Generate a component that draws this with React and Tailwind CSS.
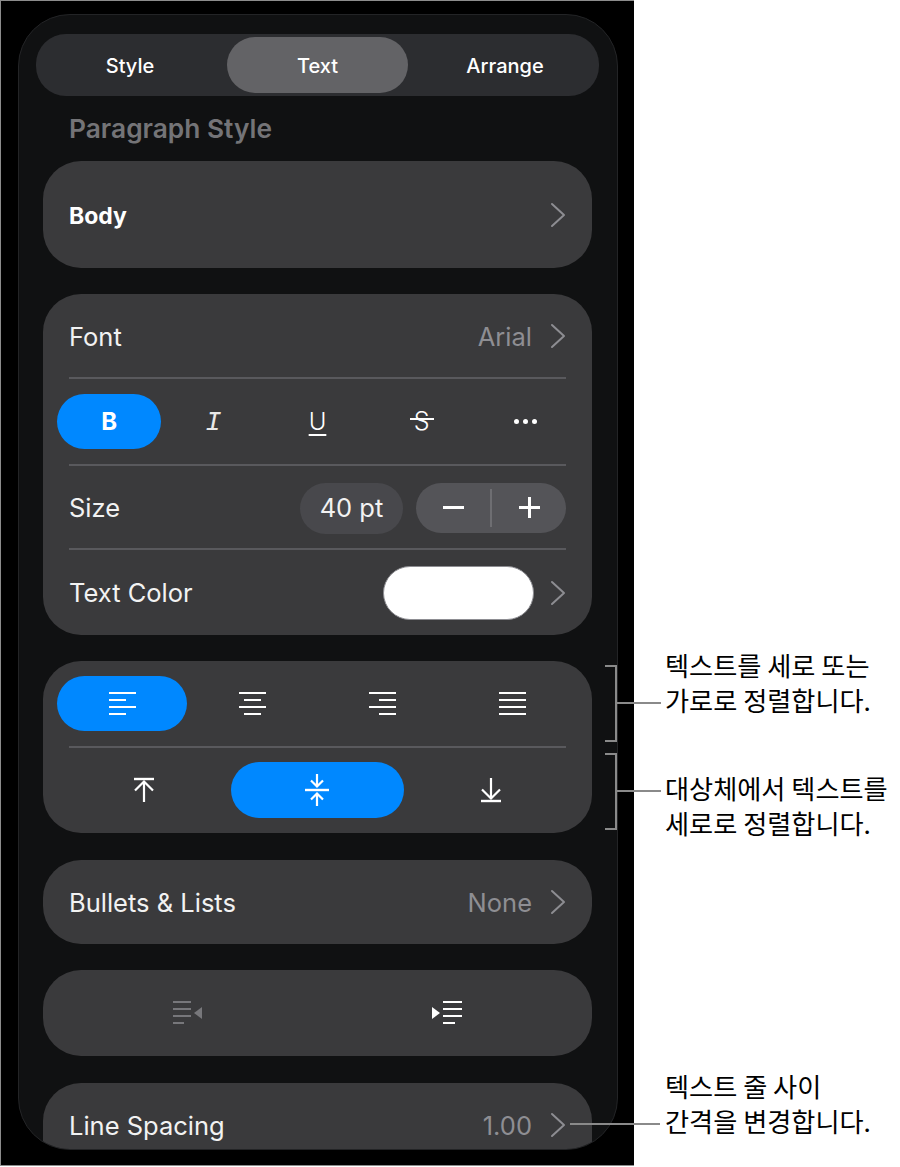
const ui = { fontFamily: 'Inter, "Noto Sans", sans-serif' };

const Chevron = ({ className = '' }) => (
  <svg width="16" height="26" viewBox="0 0 16 26" fill="none" className={className}>
    <path d="M2 2 L14 13 L2 24" stroke="#8d8d92" strokeWidth="2" strokeLinecap="round" strokeLinejoin="round" />
  </svg>
);

const Divider = () => <div className="mx-[26px] h-[2px] bg-[#59595d]" />;

// stacked text-alignment lines, each line is [x1, x2]
const LinesIcon = ({ lines, color = 'white', width = 27 }) => (
  <svg width={width} height="26" viewBox={`0 0 ${width} 26`} fill="none">
    {lines.map(([a, b], i) => (
      <path key={i} d={`M${a} ${2 + i * 7}H${b}`} stroke={color} strokeWidth="2" />
    ))}
  </svg>
);

const ArrowIcon = ({ kind }) => (
  <svg width="26" height="36" viewBox="0 0 26 36" fill="none" stroke="white" strokeWidth="2.2">
    {kind === 'top' && (
      <>
        <path d="M3 7H23" strokeWidth="2.4" />
        <path d="M13 9V30M4 18.5L13 9.5L22 18.5" />
      </>
    )}
    {kind === 'middle' && (
      <>
        <path d="M1 18H25" strokeWidth="2.4" />
        <path d="M13 2V14M7 8.5L13 14.5L19 8.5" />
        <path d="M13 34V22M7 27.5L13 21.5L19 27.5" />
      </>
    )}
    {kind === 'bottom' && (
      <>
        <path d="M3 29H23" strokeWidth="2.4" />
        <path d="M13 6V27M4 17.5L13 26.5L22 17.5" />
      </>
    )}
  </svg>
);

const Row = ({ label, value, bold, nudge = 'pt-[4px]' }) => (
  <div className="flex h-full items-center justify-between pl-[26px] pr-[26px]">
    <span className={bold ? `${nudge} text-[23px] font-bold text-white` : `${nudge} text-[25.5px] text-[#f2f2f2]`}>{label}</span>
    <div className="flex items-center gap-[18px]">
      {value && <span className={`${nudge} text-[25.5px] text-[#8e8e93]`}>{value}</span>}
      <Chevron />
    </div>
  </div>
);

const Card = ({ className = '', children }) => (
  <div className={`ml-[24px] mr-[25px] shrink-0 rounded-[38px] bg-[#3a3a3c] ${className}`}>{children}</div>
);

const styleTabs = [
  { label: 'Style', cls: 'w-[191px] pr-[3px]' },
  { label: 'Text', cls: 'w-[181px] rounded-[28px] bg-[#636366]' },
  { label: 'Arrange', cls: 'w-[190px] pl-[4px]' },
];

const alignIcons = [
  [[0, 27], [0, 17], [0, 27], [0, 17]],
  [[0, 27], [5, 22], [0, 27], [5, 22]],
  [[0, 27], [10, 27], [0, 27], [10, 27]],
  [[0, 27], [0, 27], [0, 27], [0, 27]],
];

const Bracket = ({ className }) => (
  <svg width="60" height="80" viewBox="0 0 60 80" fill="none" stroke="#8a8a8a" strokeWidth="2" className={`absolute ${className}`}>
    <path d="M0 2H11V77H0M11 39H56" />
  </svg>
);

const noteClass = 'absolute left-[665px] whitespace-nowrap text-[26.2px] leading-[35px] text-black';
const noteFont = { fontFamily: '"Noto Sans CJK KR", sans-serif' };

export default function App() {
  return (
    <div className="relative h-[1167px] w-[900px] overflow-hidden bg-white" style={ui}>
      <div className="h-[1166px] w-[634px] border-y border-l border-[#8c8c8c] bg-black pl-[17px] pt-[13px]">
        <div className="flex h-[1136px] w-[600px] flex-col overflow-hidden rounded-[52px] border border-[#232426] bg-[#101112]">
          {/* Tabs */}
          <div className="ml-[17px] mr-[18px] mt-[19px] flex h-[62px] shrink-0 items-center rounded-[30px] bg-[#2c2d30]">
            {styleTabs.map((t) => (
              <div key={t.label} className={`flex h-[56px] items-center justify-center pt-[1px] text-[20px] font-medium text-white ${t.cls}`}>
                {t.label}
              </div>
            ))}
          </div>

          <div className="ml-[50px] mt-[16px] h-[34px] text-[26.3px] font-semibold leading-[34px] text-[#747477]">Paragraph Style</div>

          <Card className="mt-[15px] h-[107px]">
            <Row label="Body" bold />
          </Card>

          {/* Font card */}
          <Card className="mt-[26px] h-[341px]">
            <div className="h-[83px]">
              <Row label="Font" value="Arial" />
            </div>
            <Divider />
            <div className="grid h-[85px] grid-cols-5 items-center px-[14px] text-white">
              <div className="flex h-[55px] items-center justify-center rounded-[28px] bg-[#0088ff] text-[24px] font-bold">B</div>
              <div className="flex items-center justify-center pt-[3px] text-[27px] italic text-[#e8e8e8]" style={{ fontFamily: '"Liberation Mono", monospace' }}>I</div>
              <div className="flex items-center justify-center text-[24px] font-light underline decoration-[1.5px] underline-offset-4">U</div>
              <div className="flex items-center justify-center">
                <div className="relative flex justify-center text-[25px] font-light">
                  S
                  <div className="absolute left-[-4px] right-[-4px] top-[15px] h-[2px] bg-white" />
                </div>
              </div>
              <div className="flex items-center justify-center gap-[4px]">
                <span className="h-[5px] w-[5px] rounded-full bg-white" />
                <span className="h-[5px] w-[5px] rounded-full bg-white" />
                <span className="h-[5px] w-[5px] rounded-full bg-white" />
              </div>
            </div>
            <Divider />
            <div className="flex h-[82px] items-center pl-[26px]">
              <span className="pt-[2px] text-[25.5px] text-[#f2f2f2]">Size</span>
              <div className="ml-auto mt-[2px] flex h-[51px] w-[103px] items-center justify-center rounded-full bg-[#48484c] text-[25.5px] text-[#f2f2f2]">40 pt</div>
              <div className="ml-[13px] mr-[26px] mt-[1px] flex h-[50px] w-[150px] items-center rounded-full bg-[#545458]">
                <div className="flex flex-1 justify-center">
                  <div className="h-[3px] w-[21px] bg-white" />
                </div>
                <div className="h-[38px] w-[2px] bg-[#6e6e72]" />
                <div className="relative flex flex-1 items-center justify-center">
                  <div className="h-[3px] w-[21px] bg-white" />
                  <div className="absolute h-[21px] w-[3px] bg-white" />
                </div>
              </div>
            </div>
            <Divider />
            <div className="flex h-[85px] items-center justify-between pl-[26px] pr-[26px]">
              <span className="pt-[2px] text-[25.5px] text-[#f2f2f2]">Text Color</span>
              <div className="flex items-center gap-[16px]">
                <div className="h-[54px] w-[151px] rounded-[27px] border border-[#8d8d92] bg-white" />
                <Chevron />
              </div>
            </div>
          </Card>

          {/* Alignment card */}
          <Card className="mt-[26px] h-[172px]">
            <div className="grid h-[85px] grid-cols-4 items-center px-[14px]">
              {alignIcons.map((lines, i) => (
                <div key={i} className={`flex h-[55px] items-center justify-center rounded-[28px] ${i === 0 ? 'bg-[#0088ff]' : ''}`}>
                  <LinesIcon lines={lines} />
                </div>
              ))}
            </div>
            <Divider />
            <div className="grid h-[83px] grid-cols-3 items-center px-[14px]">
              {['top', 'middle', 'bottom'].map((k) => (
                <div key={k} className={`flex h-[56px] items-center justify-center rounded-[28px] ${k === 'middle' ? 'bg-[#0088ff]' : ''}`}>
                  <ArrowIcon kind={k} />
                </div>
              ))}
            </div>
          </Card>

          <Card className="mt-[27px] h-[84px]">
            <Row label="Bullets & Lists" value="None" nudge="pt-[2px]" />
          </Card>

          {/* Indent card */}
          <Card className="mt-[26px] h-[86px]">
            <div className="grid h-full grid-cols-2 items-center px-[14px]">
              <div className="flex items-center justify-center gap-[3px]">
                <LinesIcon width={24} color="#77777b" lines={[[0, 18], [0, 18], [0, 18], [0, 11]]} />
                <svg width="8" height="12" viewBox="0 0 8 12" className="-ml-[6px]">
                  <path d="M8 0V12L0 6Z" fill="#77777b" />
                </svg>
              </div>
              <div className="flex items-center justify-center gap-[3px]">
                <svg width="8" height="12" viewBox="0 0 8 12">
                  <path d="M0 0V12L8 6Z" fill="white" />
                </svg>
                <LinesIcon width={20} lines={[[0, 19], [0, 19], [0, 19], [0, 12]]} />
              </div>
            </div>
          </Card>

          <Card className="mt-[27px] h-[120px]">
            <div className="h-[84px]">
              <Row label="Line Spacing" value="1.00" nudge="pt-[2px]" />
            </div>
          </Card>
        </div>
      </div>

      {/* Callouts */}
      <Bracket className="left-[605px] top-[664px]" />
      <Bracket className="left-[605px] top-[752px]" />
      <div className="absolute left-[570px] top-[1123px] h-[2px] w-[90px] bg-[#8a8a8a]" />

      <div className={`${noteClass} top-[648px]`} style={noteFont}>텍스트를 세로 또는<br />가로로 정렬합니다.</div>
      <div className={`${noteClass} top-[771px]`} style={noteFont}>대상체에서 텍스트를<br />세로로 정렬합니다.</div>
      <div className={`${noteClass} top-[1069px]`} style={noteFont}>텍스트 줄 사이<br />간격을 변경합니다.</div>
    </div>
  );
}
